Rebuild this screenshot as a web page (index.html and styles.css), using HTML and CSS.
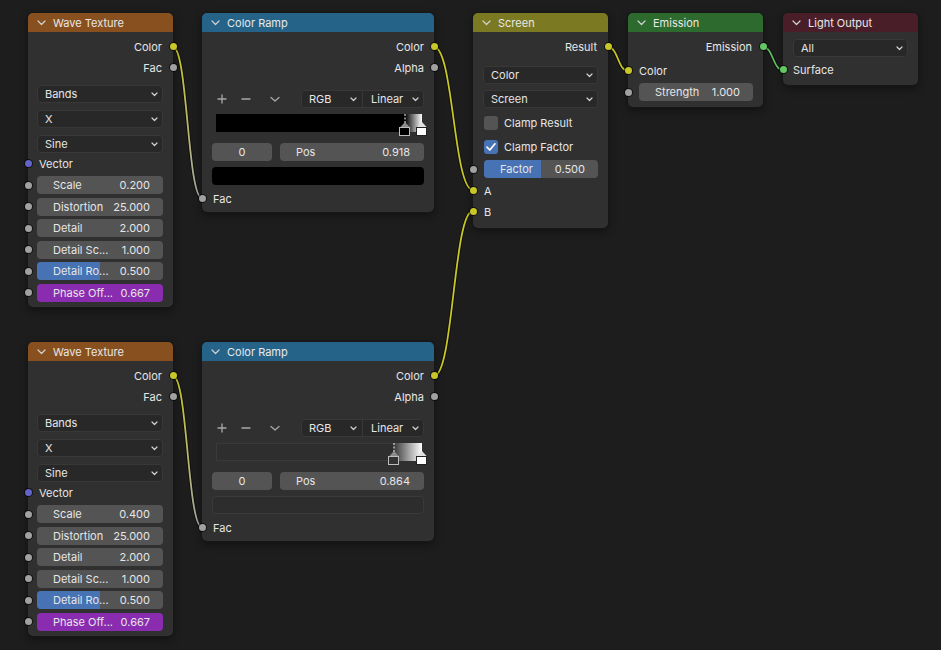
FILE: index.html
```html
<!DOCTYPE html>
<html lang="en">
<head>
    <meta charset="UTF-8">
    <meta name="viewport" content="width=device-width, initial-scale=1.0">
    <title>Shader Editor</title>
    <link rel="stylesheet" href="styles.css">
</head>
<body>
<div class="editor">

    <!-- links between sockets, drawn under the nodes -->
    <svg class="wires" width="941" height="650" viewBox="0 0 941 650">
        <defs>
            <linearGradient id="facLinkA" gradientUnits="userSpaceOnUse" x1="0" y1="47" x2="0" y2="198">
                <stop offset="0" stop-color="#c7c729"/>
                <stop offset="1" stop-color="#a8a8a8"/>
            </linearGradient>
            <linearGradient id="facLinkB" gradientUnits="userSpaceOnUse" x1="0" y1="376" x2="0" y2="527">
                <stop offset="0" stop-color="#c7c729"/>
                <stop offset="1" stop-color="#a8a8a8"/>
            </linearGradient>
        </defs>
        <g class="wire-outline">
            <path d="M173 47 C187.5 47 187.5 198 202 198"/>
            <path d="M434 47 C453.5 47 453.5 190 473 190"/>
            <path d="M434 376 C453.5 376 453.5 211 473 211"/>
            <path d="M608 47 C618 47 618 71 628 71"/>
            <path d="M763 47 C773 47 773 70 783 70"/>
            <path d="M173 376 C187.5 376 187.5 527 202 527"/>
        </g>
        <path class="wire" stroke="url(#facLinkA)" d="M173 47 C187.5 47 187.5 198 202 198"/>
        <path class="wire" stroke="#c7c729" d="M434 47 C453.5 47 453.5 190 473 190"/>
        <path class="wire" stroke="#c7c729" d="M434 376 C453.5 376 453.5 211 473 211"/>
        <path class="wire" stroke="#c7c729" d="M608 47 C618 47 618 71 628 71"/>
        <path class="wire" stroke="#5fbf5f" d="M763 47 C773 47 773 70 783 70"/>
        <path class="wire" stroke="url(#facLinkB)" d="M173 376 C187.5 376 187.5 527 202 527"/>
    </svg>

    <!-- Wave Texture (upper) -->
    <div class="node wave wave-a">
        <div class="node-head head-texture">
            <svg class="collapse" width="9" height="6" viewBox="0 0 9 6"><path d="M1 1 L4.5 4.5 L8 1"/></svg>
            Wave Texture
        </div>
        <div class="node-body">
            <div class="row out"><span>Color</span><i class="socket s-color"></i></div>
            <div class="row out"><span>Fac</span><i class="socket s-float"></i></div>
            <div class="menus">
                <div class="menu"><span>Bands</span><svg class="chev" width="7" height="5" viewBox="0 0 7 5"><path d="M1 1 L3.5 3.5 L6 1"/></svg></div>
                <div class="menu"><span>X</span><svg class="chev" width="7" height="5" viewBox="0 0 7 5"><path d="M1 1 L3.5 3.5 L6 1"/></svg></div>
                <div class="menu"><span>Sine</span><svg class="chev" width="7" height="5" viewBox="0 0 7 5"><path d="M1 1 L3.5 3.5 L6 1"/></svg></div>
            </div>
            <div class="row"><i class="socket in s-vector"></i><span>Vector</span></div>
            <div class="sliders">
                <div class="slider-row"><i class="socket in s-float"></i><div class="slider"><span>Scale</span><span>0.200</span></div></div>
                <div class="slider-row"><i class="socket in s-float"></i><div class="slider"><span>Distortion</span><span>25.000</span></div></div>
                <div class="slider-row"><i class="socket in s-float"></i><div class="slider"><span>Detail</span><span>2.000</span></div></div>
                <div class="slider-row"><i class="socket in s-float"></i><div class="slider"><span>Detail Sc...</span><span>1.000</span></div></div>
                <div class="slider-row"><i class="socket in s-float"></i><div class="slider"><b class="fill" style="width: 50%"></b><span>Detail Ro...</span><span>0.500</span></div></div>
                <div class="slider-row"><i class="socket in s-float"></i><div class="slider driven"><span>Phase Off...</span><span>0.667</span></div></div>
            </div>
        </div>
    </div>

    <!-- Color Ramp (upper) -->
    <div class="node ramp ramp-a">
        <div class="node-head head-converter">
            <svg class="collapse" width="9" height="6" viewBox="0 0 9 6"><path d="M1 1 L4.5 4.5 L8 1"/></svg>
            Color Ramp
        </div>
        <div class="node-body">
            <div class="row out"><span>Color</span><i class="socket s-color"></i></div>
            <div class="row out"><span>Alpha</span><i class="socket s-float"></i></div>
            <div class="ramp-tools">
                <div class="tools">
                    <svg class="tool" width="20" height="18" viewBox="0 0 20 18"><path d="M10 5 V13 M6 9 H14"/></svg>
                    <svg class="tool" width="20" height="18" viewBox="0 0 20 18"><path d="M6 9 H14"/></svg>
                    <svg class="tool tool-more" width="20" height="18" viewBox="0 0 20 18"><path d="M6 7.5 L10 11 L14 7.5"/></svg>
                </div>
                <div class="menu-pair">
                    <div class="seg"><span>RGB</span><svg class="chev" width="7" height="5" viewBox="0 0 7 5"><path d="M1 1 L3.5 3.5 L6 1"/></svg></div>
                    <div class="seg"><span>Linear</span><svg class="chev" width="7" height="5" viewBox="0 0 7 5"><path d="M1 1 L3.5 3.5 L6 1"/></svg></div>
                </div>
            </div>
            <svg class="ramp-bar" width="214" height="22" viewBox="0 0 214 22">
                <defs>
                    <linearGradient id="rampA" x1="0" y1="0" x2="1" y2="0">
                        <stop offset="0" stop-color="#000"/>
                        <stop offset="1" stop-color="#fff"/>
                    </linearGradient>
                </defs>
                <rect x="2" y="0" width="206" height="18" fill="#000"/>
                <rect x="191" y="0" width="17" height="18" fill="url(#rampA)"/>
                <path class="stop-line" d="M191 0 V9"/>
                <polygon points="186,13.5 191,8 196,13.5" fill="#8c8c8c"/>
                <rect x="185.5" y="13.5" width="10" height="8" fill="#000" stroke="#bdbdbd"/>
                <polygon points="203,13.5 208,8 213,13.5" fill="#e0e0e0"/>
                <rect x="202.5" y="13.5" width="10" height="8" fill="#fff" stroke="#222"/>
            </svg>
            <div class="ramp-fields">
                <div class="field index">0</div>
                <div class="field pos"><span>Pos</span><span>0.918</span></div>
            </div>
            <div class="swatch swatch-black"></div>
            <div class="row fac"><i class="socket in s-float"></i><span>Fac</span></div>
        </div>
    </div>

    <!-- Screen mix -->
    <div class="node screen">
        <div class="node-head head-color">
            <svg class="collapse" width="9" height="6" viewBox="0 0 9 6"><path d="M1 1 L4.5 4.5 L8 1"/></svg>
            Screen
        </div>
        <div class="node-body">
            <div class="row out"><span>Result</span><i class="socket s-color"></i></div>
            <div class="menus">
                <div class="menu"><span>Color</span><svg class="chev" width="7" height="5" viewBox="0 0 7 5"><path d="M1 1 L3.5 3.5 L6 1"/></svg></div>
                <div class="menu"><span>Screen</span><svg class="chev" width="7" height="5" viewBox="0 0 7 5"><path d="M1 1 L3.5 3.5 L6 1"/></svg></div>
            </div>
            <div class="checks">
                <label class="check"><span class="box"></span>Clamp Result</label>
                <label class="check"><span class="box on"><svg width="14" height="14" viewBox="0 0 14 14"><path d="M3 7.2 L5.8 10 L11 3.8"/></svg></span>Clamp Factor</label>
            </div>
            <div class="slider-row factor"><i class="socket in s-float"></i><div class="slider"><b class="fill" style="width: 50%"></b><span>Factor</span><span>0.500</span></div></div>
            <div class="row ab"><i class="socket in s-color"></i><span>A</span></div>
            <div class="row"><i class="socket in s-color"></i><span>B</span></div>
        </div>
    </div>

    <!-- Emission -->
    <div class="node emission">
        <div class="node-head head-shader">
            <svg class="collapse" width="9" height="6" viewBox="0 0 9 6"><path d="M1 1 L4.5 4.5 L8 1"/></svg>
            Emission
        </div>
        <div class="node-body">
            <div class="row out"><span>Emission</span><i class="socket s-shader"></i></div>
            <div class="row in-color"><i class="socket in s-color"></i><span>Color</span></div>
            <div class="slider-row strength"><i class="socket in s-float"></i><div class="slider"><span>Strength</span><span>1.000</span></div></div>
        </div>
    </div>

    <!-- Light Output -->
    <div class="node output">
        <div class="node-head head-output">
            <svg class="collapse" width="9" height="6" viewBox="0 0 9 6"><path d="M1 1 L4.5 4.5 L8 1"/></svg>
            Light Output
        </div>
        <div class="node-body">
            <div class="menus">
                <div class="menu"><span>All</span><svg class="chev" width="7" height="5" viewBox="0 0 7 5"><path d="M1 1 L3.5 3.5 L6 1"/></svg></div>
            </div>
            <div class="row surface"><i class="socket in s-shader"></i><span>Surface</span></div>
        </div>
    </div>

    <!-- Wave Texture (lower) -->
    <div class="node wave wave-b">
        <div class="node-head head-texture">
            <svg class="collapse" width="9" height="6" viewBox="0 0 9 6"><path d="M1 1 L4.5 4.5 L8 1"/></svg>
            Wave Texture
        </div>
        <div class="node-body">
            <div class="row out"><span>Color</span><i class="socket s-color"></i></div>
            <div class="row out"><span>Fac</span><i class="socket s-float"></i></div>
            <div class="menus">
                <div class="menu"><span>Bands</span><svg class="chev" width="7" height="5" viewBox="0 0 7 5"><path d="M1 1 L3.5 3.5 L6 1"/></svg></div>
                <div class="menu"><span>X</span><svg class="chev" width="7" height="5" viewBox="0 0 7 5"><path d="M1 1 L3.5 3.5 L6 1"/></svg></div>
                <div class="menu"><span>Sine</span><svg class="chev" width="7" height="5" viewBox="0 0 7 5"><path d="M1 1 L3.5 3.5 L6 1"/></svg></div>
            </div>
            <div class="row"><i class="socket in s-vector"></i><span>Vector</span></div>
            <div class="sliders">
                <div class="slider-row"><i class="socket in s-float"></i><div class="slider"><span>Scale</span><span>0.400</span></div></div>
                <div class="slider-row"><i class="socket in s-float"></i><div class="slider"><span>Distortion</span><span>25.000</span></div></div>
                <div class="slider-row"><i class="socket in s-float"></i><div class="slider"><span>Detail</span><span>2.000</span></div></div>
                <div class="slider-row"><i class="socket in s-float"></i><div class="slider"><span>Detail Sc...</span><span>1.000</span></div></div>
                <div class="slider-row"><i class="socket in s-float"></i><div class="slider"><b class="fill" style="width: 50%"></b><span>Detail Ro...</span><span>0.500</span></div></div>
                <div class="slider-row"><i class="socket in s-float"></i><div class="slider driven"><span>Phase Off...</span><span>0.667</span></div></div>
            </div>
        </div>
    </div>

    <!-- Color Ramp (lower) -->
    <div class="node ramp ramp-b">
        <div class="node-head head-converter">
            <svg class="collapse" width="9" height="6" viewBox="0 0 9 6"><path d="M1 1 L4.5 4.5 L8 1"/></svg>
            Color Ramp
        </div>
        <div class="node-body">
            <div class="row out"><span>Color</span><i class="socket s-color"></i></div>
            <div class="row out"><span>Alpha</span><i class="socket s-float"></i></div>
            <div class="ramp-tools">
                <div class="tools">
                    <svg class="tool" width="20" height="18" viewBox="0 0 20 18"><path d="M10 5 V13 M6 9 H14"/></svg>
                    <svg class="tool" width="20" height="18" viewBox="0 0 20 18"><path d="M6 9 H14"/></svg>
                    <svg class="tool tool-more" width="20" height="18" viewBox="0 0 20 18"><path d="M6 7.5 L10 11 L14 7.5"/></svg>
                </div>
                <div class="menu-pair">
                    <div class="seg"><span>RGB</span><svg class="chev" width="7" height="5" viewBox="0 0 7 5"><path d="M1 1 L3.5 3.5 L6 1"/></svg></div>
                    <div class="seg"><span>Linear</span><svg class="chev" width="7" height="5" viewBox="0 0 7 5"><path d="M1 1 L3.5 3.5 L6 1"/></svg></div>
                </div>
            </div>
            <svg class="ramp-bar" width="214" height="22" viewBox="0 0 214 22">
                <defs>
                    <linearGradient id="rampB" x1="0" y1="0" x2="1" y2="0">
                        <stop offset="0" stop-color="#3a3a3a"/>
                        <stop offset="1" stop-color="#fff"/>
                    </linearGradient>
                </defs>
                <rect x="2.5" y="0.5" width="205" height="17" fill="#2e2e2e" stroke="#3a3a3a"/>
                <rect x="180" y="0" width="28" height="18" fill="url(#rampB)"/>
                <path class="stop-line" d="M180 0 V9"/>
                <polygon points="175,13.5 180,8 185,13.5" fill="#8c8c8c"/>
                <rect x="174.5" y="13.5" width="10" height="8" fill="#333" stroke="#bdbdbd"/>
                <polygon points="203,13.5 208,8 213,13.5" fill="#e0e0e0"/>
                <rect x="202.5" y="13.5" width="10" height="8" fill="#fff" stroke="#222"/>
            </svg>
            <div class="ramp-fields">
                <div class="field index">0</div>
                <div class="field pos"><span>Pos</span><span>0.864</span></div>
            </div>
            <div class="swatch swatch-clear"></div>
            <div class="row fac"><i class="socket in s-float"></i><span>Fac</span></div>
        </div>
    </div>

</div>
</body>
</html>
```

FILE: styles.css
```css
* {
    margin: 0;
    padding: 0;
    box-sizing: border-box;
}

body {
    background: #1d1d1d;
    font-family: Inter, 'Noto Sans', 'DejaVu Sans', sans-serif;
    font-size: 11px;
    color: #e6e6e6;
}

.editor {
    position: relative;
    width: 941px;
    height: 650px;
    overflow: hidden;
    background: #1d1d1d;
}

/* links */
.wires {
    position: absolute;
    left: 0;
    top: 0;
}

.wire-outline path {
    fill: none;
    stroke: rgba(0, 0, 0, 0.55);
    stroke-width: 3.6;
}

.wire {
    fill: none;
    stroke-width: 1.8;
}

/* node frame */
.node {
    position: absolute;
    width: 135px;
    background: #303030;
    border-radius: 5px;
    box-shadow: 0 0 0 1px #171717, 0 3px 8px rgba(0, 0, 0, 0.45);
}

.wave-a { left: 28px; top: 13px; width: 145px; }
.wave-b { left: 28px; top: 342px; width: 145px; }
.ramp-a { left: 202px; top: 13px; width: 232px; }
.ramp-b { left: 202px; top: 342px; width: 232px; }
.screen { left: 473px; top: 13px; }
.emission { left: 628px; top: 13px; }
.output { left: 783px; top: 13px; }

.node-head {
    height: 19px;
    display: flex;
    align-items: center;
    gap: 7px;
    padding-left: 9px;
    border-radius: 5px 5px 0 0;
    color: #e8e8e8;
}

.head-texture { background: #88501f; }
.head-converter { background: #256488; }
.head-color { background: #7b7a22; }
.head-shader { background: #2c6a2e; }
.head-output { background: #4a1e28; }

.collapse path,
.chev path {
    fill: none;
    stroke: #d2d2d2;
    stroke-width: 1.2;
    stroke-linecap: round;
    stroke-linejoin: round;
}

.node-body {
    display: flex;
    flex-direction: column;
    padding: 4px 0 5px;
}

/* socket rows */
.row {
    position: relative;
    height: 21px;
    display: flex;
    align-items: center;
    padding: 0 11px;
}

.row.out {
    justify-content: flex-end;
    padding-right: 11px;
}

.ramp .row.out {
    padding-right: 10px;
}

.socket {
    position: absolute;
    top: 50%;
    right: -3.5px;
    width: 7px;
    height: 7px;
    margin-top: -3.5px;
    border-radius: 50%;
    box-shadow: 0 0 0 1px rgba(0, 0, 0, 0.6);
}

.socket.in {
    right: auto;
    left: -3.5px;
}

.s-color { background: #c7c729; }
.s-float { background: #a1a1a1; }
.s-vector { background: #6363c7; }
.s-shader { background: #63c763; }

/* dropdown menus */
.menus {
    display: flex;
    flex-direction: column;
    gap: 7px;
    margin: 7px 10px 0 9px;
}

.menu {
    height: 18px;
    display: flex;
    align-items: center;
    justify-content: space-between;
    padding: 0 5px 0 8px;
    background: #282828;
    border-radius: 4px;
    box-shadow: inset 0 0 0 1px #383838;
}

/* number sliders */
.sliders {
    display: flex;
    flex-direction: column;
    gap: 3.5px;
    margin-top: 2px;
}

.slider-row {
    position: relative;
    padding: 0 10px 0 9px;
}

.slider {
    position: relative;
    height: 18px;
    display: flex;
    align-items: center;
    justify-content: space-between;
    padding: 0 13px 0 16px;
    background: #545454;
    border-radius: 4px;
    overflow: hidden;
}

.slider span {
    position: relative;
    white-space: nowrap;
}

.slider .fill {
    position: absolute;
    left: 0;
    top: 0;
    bottom: 0;
    background: #4772b3;
}

.slider.driven {
    background: #8a2cb0;
}

/* color ramp widgets */
.ramp-tools {
    display: flex;
    align-items: center;
    height: 18px;
    margin: 12px 10px 0;
}

.tools {
    display: flex;
    width: 89px;
}

.tool {
    margin-right: 4px;
}

.tool-more {
    margin-left: 5px;
}

.tool path {
    fill: none;
    stroke: #a8a8a8;
    stroke-width: 1.3;
    stroke-linecap: round;
    stroke-linejoin: round;
}

.menu-pair {
    flex: 1;
    display: flex;
    height: 18px;
    background: #282828;
    border-radius: 4px;
    box-shadow: inset 0 0 0 1px #383838;
}

.seg {
    flex: 1;
    display: flex;
    align-items: center;
    justify-content: space-between;
    padding: 0 5px 0 8px;
}

.seg + .seg {
    border-left: 1px solid #383838;
}

.ramp-bar {
    display: block;
    margin: 6px 0 0 12px;
}

.stop-line {
    stroke: #fff;
    stroke-width: 1;
    stroke-dasharray: 2 1.5;
}

.ramp-fields {
    display: flex;
    gap: 8px;
    height: 18px;
    margin: 7px 10px 0;
}

.field {
    height: 18px;
    display: flex;
    align-items: center;
    background: #545454;
    border-radius: 4px;
}

.field.index {
    width: 60px;
    justify-content: center;
}

.field.pos {
    flex: 1;
    justify-content: space-between;
    padding: 0 14px 0 16px;
}

.swatch {
    height: 18px;
    margin: 6px 10px 0;
    border-radius: 4px;
}

.swatch-black {
    background: #000;
}

.swatch-clear {
    background: #2d2d2d;
    box-shadow: inset 0 0 0 1px #3a3a3a;
}

.row.fac {
    margin-top: 3px;
}

.ramp .node-body {
    padding-bottom: 3px;
}

/* mix node */
.screen .menus {
    gap: 6px;
    margin: 9px 10px 0;
}

.checks {
    display: flex;
    flex-direction: column;
    gap: 4px;
    margin-top: 5px;
}

.check {
    height: 20px;
    display: flex;
    align-items: center;
    gap: 6px;
    padding-left: 11px;
}

.check .box {
    width: 14px;
    height: 14px;
    border-radius: 3px;
    background: #545454;
}

.check .box.on {
    background: #4772b3;
}

.check .box svg {
    display: block;
}

.check .box path {
    fill: none;
    stroke: #fff;
    stroke-width: 1.7;
    stroke-linecap: round;
    stroke-linejoin: round;
}

.slider-row.factor {
    margin-top: 3px;
    padding: 0 10px 0 11px;
}

.row.ab {
    margin-top: 2px;
}

.screen .node-body {
    padding-bottom: 6px;
}

/* emission + output */
.row.in-color {
    margin-top: 3px;
}

.slider-row.strength {
    margin-top: 2px;
    padding: 0 10px 0 11px;
}

.emission .node-body {
    padding-bottom: 6px;
}

.output .node-body {
    padding-top: 7px;
}

.output .menus {
    margin: 0 10px;
}

.row.surface {
    margin-top: 2px;
    padding-left: 10px;
}
```
